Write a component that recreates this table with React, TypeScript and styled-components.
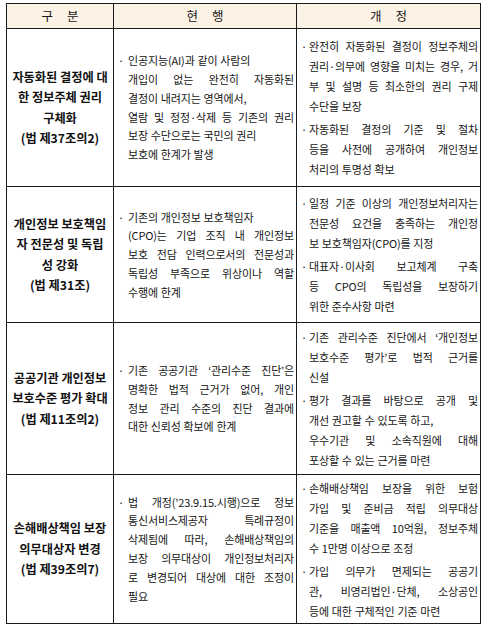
import React from 'react';
import styled, { createGlobalStyle } from 'styled-components';

const LINE = '#1a1a1a';

const GlobalStyle = createGlobalStyle`
    html, body {
        margin: 0;
        padding: 0;
        background: #fff;
    }
    body {
        font-family: 'Noto Sans CJK KR', 'Noto Sans', sans-serif;
        color: #161616;
    }
`;

const Table = styled.div`
    margin: 3px 0 0 6px;
    width: max-content;
    display: grid;
    grid-template-columns: 107px 183px 184px;
    grid-template-rows: 25px 158px 136px 152px 149px;
    border-top: 1px solid ${LINE};
    border-left: 1px solid ${LINE};
`;

const Cell = styled.div`
    box-sizing: border-box;
    border-right: 1px solid ${LINE};
    border-bottom: 1px solid ${LINE};
    min-width: 0;
    overflow: hidden;
`;

const HeadCell = styled(Cell)`
    background: #fcf3e6;
    font-size: 12.5px;
    word-spacing: 11px;
    display: flex;
    align-items: center;
    justify-content: center;
    padding-bottom: 1px;
`;

const TitleCell = styled(Cell)`
    display: flex;
    flex-direction: column;
    justify-content: center;
    align-items: center;
    font-size: 12.2px;
    font-weight: 700;
    line-height: 20.5px;
    color: #111;
    white-space: nowrap;
`;

const TextCell = styled(Cell)<{ $lh: number; $gap: number }>`
    display: flex;
    flex-direction: column;
    justify-content: center;
    gap: ${({ $gap }) => $gap}px;
    padding: 0 2px 0 3px;
    font-size: 11px;
    letter-spacing: -0.15px;
    line-height: ${({ $lh }) => $lh}px;
`;

const Bullet = styled.div`
    display: flex;
`;

const Dot = styled.span<{ $w: number }>`
    flex: 0 0 ${({ $w }) => $w}px;
    padding-left: 1px;
`;

const Lines = styled.div`
    flex: 1;
    min-width: 0;
`;

const Line = styled.div<{ $fill?: boolean }>`
    white-space: nowrap;
    display: flex;
    justify-content: ${({ $fill }) => ($fill ? 'space-between' : 'flex-start')};
    gap: ${({ $fill }) => ($fill ? '0' : '0.26em')};
`;

// '=' at the start of a line: stretched to the full width, like the original
type Item = string[];

interface Row {
    title: string[];
    now: Item[];
    next: Item[];
}

const rows: Row[] = [
    {
        title: ['자동화된 결정에 대', '한 정보주체 권리', '구체화', '(법 제37조의2)'],
        now: [
            [
                '인공지능(AI)과 같이 사람의',
                '=개입이 없는 완전히 자동화된',
                '결정이 내려지는 영역에서,',
                '=열람 및 정정·삭제 등 기존의 권리',
                '보장 수단으로는 국민의 권리',
                '보호에 한계가 발생',
            ],
        ],
        next: [
            [
                '=완전히 자동화된 결정이 정보주체의',
                '=권리·의무에 영향을 미치는 경우, 거',
                '=부 및 설명 등 최소한의 권리 구제',
                '수단을 보장',
            ],
            ['=자동화된 결정의 기준 및 절차', '=등을 사전에 공개하여 개인정보', '처리의 투명성 확보'],
        ],
    },
    {
        title: ['개인정보 보호책임', '자 전문성 및 독립', '성 강화', '(법 제31조)'],
        now: [
            [
                '기존의 개인정보 보호책임자',
                '=(CPO)는 기업 조직 내 개인정보',
                '=보호 전담 인력으로서의 전문성과',
                '=독립성 부족으로 위상이나 역할',
                '수행에 한계',
            ],
        ],
        next: [
            ['=일정 기준 이상의 개인정보처리자는', '=전문성 요건을 충족하는 개인정', '보 보호책임자(CPO)를 지정'],
            ['=대표자·이사회 보고체계 구축', '=등 CPO의 독립성을 보장하기', '위한 준수사항 마련'],
        ],
    },
    {
        title: ['공공기관 개인정보', '보호수준 평가 확대', '(법 제11조의2)'],
        now: [
            [
                '=기존 공공기관 ‘관리수준 진단’은',
                '=명확한 법적 근거가 없어, 개인',
                '=정보 관리 수준의 진단 결과에',
                '대한 신뢰성 확보에 한계',
            ],
        ],
        next: [
            ['=기존 관리수준 진단에서 ‘개인정보', '=보호수준 평가’로 법적 근거를', '신설'],
            [
                '=평가 결과를 바탕으로 공개 및',
                '개선 권고할 수 있도록 하고,',
                '=우수기관 및 소속직원에 대해',
                '포상할 수 있는 근거를 마련',
            ],
        ],
    },
    {
        title: ['손해배상책임 보장', '의무대상자 변경', '(법 제39조의7)'],
        now: [
            [
                '=법 개정(’23.9.15.시행)으로 정보',
                '=통신서비스제공자 특례규정이',
                '=삭제됨에 따라, 손해배상책임의',
                '=보장 의무대상이 개인정보처리자',
                '=로 변경되어 대상에 대한 조정이',
                '필요',
            ],
        ],
        next: [
            [
                '=손해배상책임 보장을 위한 보험',
                '=가입 및 준비금 적립 의무대상',
                '=기준을 매출액 10억원, 정보주체',
                '수 1만명 이상으로 조정',
            ],
            ['=가입 의무가 면제되는 공공기', '=관, 비영리법인·단체, 소상공인', '등에 대한 구체적인 기준 마련'],
        ],
    },
];

const renderLine = (line: string, i: number) => {
    const fill = line.startsWith('=');
    const words = (fill ? line.slice(1) : line).split(' ');
    return (
        <Line key={i} $fill={fill}>
            {words.map((w, k) => (
                <span key={k}>{w}</span>
            ))}
        </Line>
    );
};

const renderItems = (items: Item[], dot: number) =>
    items.map((lines, i) => (
        <Bullet key={i}>
            <Dot $w={dot}>·</Dot>
            <Lines>{lines.map(renderLine)}</Lines>
        </Bullet>
    ));

export default function App() {
    return (
        <>
            <GlobalStyle />
            <Table>
                <HeadCell>구 분</HeadCell>
                <HeadCell>현 행</HeadCell>
                <HeadCell>개 정</HeadCell>
                {rows.map((row, r) => (
                    <React.Fragment key={r}>
                        <TitleCell>
                            {row.title.map((t, i) => (
                                <div key={i}>{t}</div>
                            ))}
                        </TitleCell>
                        <TextCell $lh={18.8} $gap={0}>
                            {renderItems(row.now, 10)}
                        </TextCell>
                        <TextCell $lh={20} $gap={3}>
                            {renderItems(row.next, 8)}
                        </TextCell>
                    </React.Fragment>
                ))}
            </Table>
        </>
    );
}
